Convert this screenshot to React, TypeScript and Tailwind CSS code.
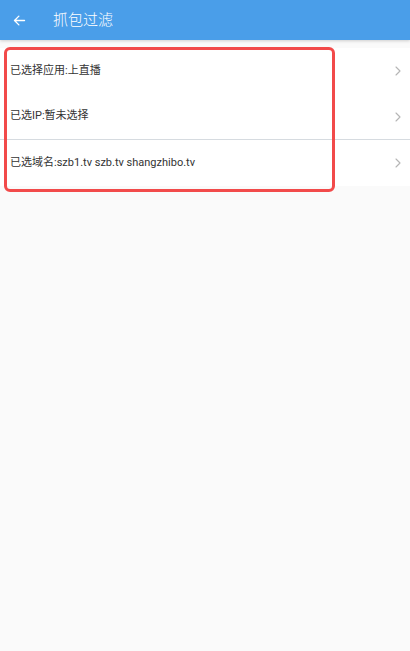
import React from 'react';

const rows = [
  { label: '已选择应用:上直播', divider: false },
  { label: '已选IP:暂未选择', divider: true },
  { label: '已选域名:szb1.tv szb.tv shangzhibo.tv', divider: false },
];

const Chevron = () => (
  <svg width="6" height="10" viewBox="0 0 6 10" fill="none">
    <path d="M1 1l4 4-4 4" stroke="#b5b5b5" strokeWidth="1.1" strokeLinecap="round" strokeLinejoin="round" />
  </svg>
);

const App: React.FC = () => {
  return (
    <div
      className="relative min-h-[651px] w-full bg-[#fafafa]"
      style={{ fontFamily: 'Roboto, "Noto Sans CJK SC", sans-serif' }}
    >
      <header className="h-[40px] bg-[#4a9ee9] flex items-center text-white shadow-[0_1px_3px_rgba(0,0,0,0.18)]">
        <div className="w-[53px] flex items-center pl-[12px]">
          <svg width="15" height="15" viewBox="0 0 24 24" fill="none">
            <path d="M20 12H4M11 5l-7 7 7 7" stroke="white" strokeWidth="2.2" strokeLinecap="round" strokeLinejoin="round" />
          </svg>
        </div>
        <h1 className="text-[15px] font-light leading-none">抓包过滤</h1>
      </header>

      <div className="mt-[8px] bg-white">
        {rows.map((r) => (
          <div
            key={r.label}
            className={`h-[46px] flex items-center justify-between pl-[10px] pr-[9px] ${r.divider ? 'border-b border-[#d6dbe0]' : ''}`}
          >
            <span className="text-[11px] text-[#333333]">{r.label}</span>
            <Chevron />
          </div>
        ))}
      </div>

      <div className="absolute left-[4px] top-[47px] w-[331px] h-[145px] border-[3px] border-[#f24a4a] rounded-[6px] pointer-events-none" />
    </div>
  );
};

export default App;
